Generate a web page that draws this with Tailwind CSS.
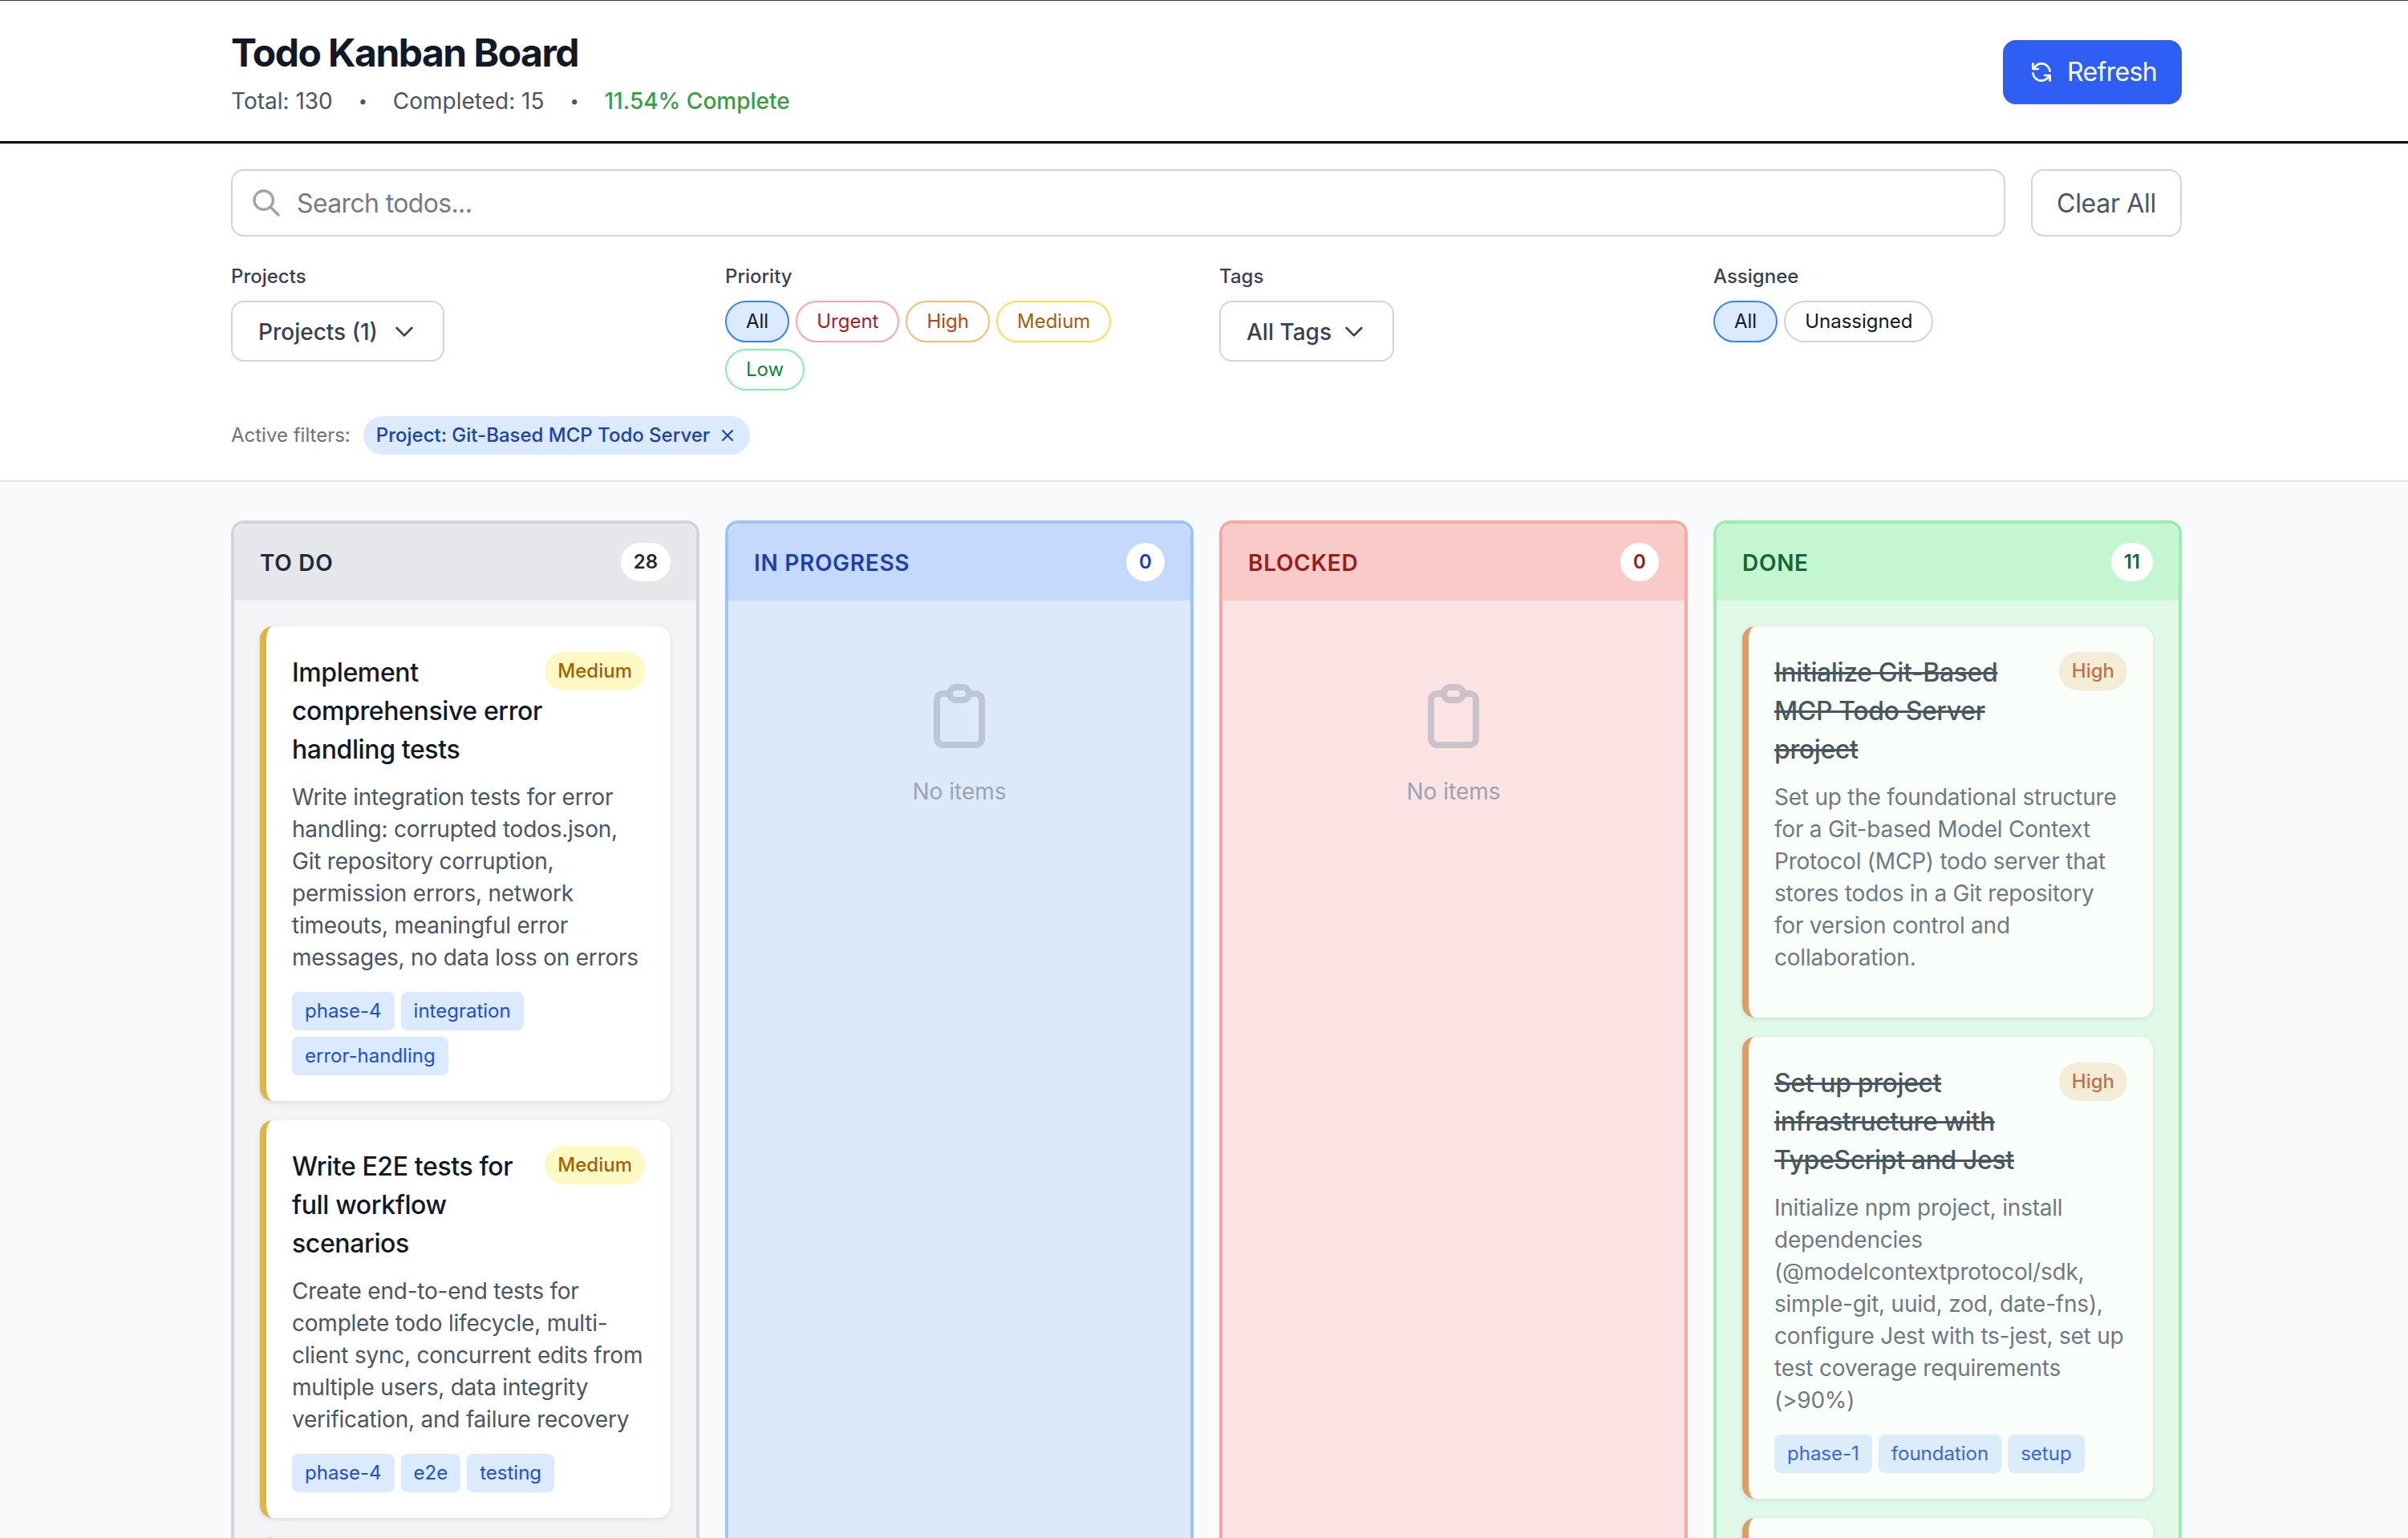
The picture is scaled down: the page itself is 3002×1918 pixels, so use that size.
<!DOCTYPE html>
<html lang="en">
  <head>
    <meta charset="UTF-8" />
    <title>Todo Kanban Board</title>
    <script src="https://cdn.jsdelivr.net/npm/@tailwindcss/browser@4"></script>
  </head>
  <body class="h-[1918px] overflow-hidden bg-[#f9fafb] font-['Inter',sans-serif] text-[#111827]">
    <!-- header -->
    <header class="border-t border-b-[3px] border-t-[#3f3f46] border-b-black bg-white pt-[33px] pb-[30px] pl-[288px]">
      <div class="flex w-[2432px] items-center justify-between">
        <div>
          <h1 class="text-[48px] leading-[64px] font-bold tracking-[-0.032em] text-[#111827]">Todo Kanban Board</h1>
          <div class="mt-2 flex gap-8 text-[28px] leading-[40px] text-[#4b5563]">
            <span>Total: 130</span>
            <span class="flex w-[11px] justify-center text-[20px]">•</span>
            <span>Completed: 15</span>
            <span class="flex w-[11px] justify-center text-[20px]">•</span>
            <span class="font-medium text-[#3a9e3f]">11.54% Complete</span>
          </div>
        </div>
        <button class="flex h-[80px] w-[223px] items-center gap-4 rounded-[16px] bg-[#2f5ef5] px-8 text-[32px] tracking-[-0.02em] text-white">
          <svg class="h-8 w-8 shrink-0" fill="none" viewBox="0 0 24 24" stroke="currentColor" stroke-width="2" stroke-linecap="round" stroke-linejoin="round"><path d="M4 4v5h.582m15.356 2A8.001 8.001 0 004.582 9m0 0H9m11 11v-5h-.581m0 0a8.003 8.003 0 01-15.357-2m15.357 2H15" /></svg>
          Refresh
        </button>
      </div>
    </header>

    <!-- filters -->
    <section class="border-b-2 border-[#e5e7eb] bg-white pt-8 pb-8 pl-[288px]">
      <div class="w-[2432px]">
        <div class="flex gap-8">
          <div class="flex h-[84px] flex-1 items-center gap-[18px] rounded-[16px] border-2 border-[#d1d5db] pl-[22px]">
            <svg class="h-10 w-10 text-[#9ca3af]" fill="none" viewBox="0 0 24 24" stroke="currentColor" stroke-width="2" stroke-linecap="round" stroke-linejoin="round"><path d="M21 21l-6-6m2-5a7 7 0 11-14 0 7 7 0 0114 0z" /></svg>
            <input class="flex-1 bg-transparent pt-[2px] text-[32px] tracking-[-0.02em] outline-none placeholder:text-[#757b86]" placeholder="Search todos..." />
          </div>
          <button class="h-[84px] w-[188px] rounded-[16px] border-2 border-[#d1d5db] bg-white pt-[2px] text-[32px] tracking-[-0.01em] text-[#4b5563]">Clear All</button>
        </div>

        <div class="mt-8 grid grid-cols-4 gap-8">
          <div>
            <div class="mb-3.5 pt-0.5 text-[24px] leading-[32px] font-medium text-[#374151]">Projects</div>
            <button class="flex h-[76px] w-[266px] items-center justify-between rounded-[16px] border-2 border-[#d1d5db] bg-white px-8 text-[28px] font-medium text-[#374151]">
              <span class="pt-[2px]">Projects (1)</span>
              <svg class="h-8 w-8" fill="none" viewBox="0 0 24 24" stroke="currentColor" stroke-width="2" stroke-linecap="round" stroke-linejoin="round"><path d="M19 9l-7 7-7-7" /></svg>
            </button>
          </div>
          <div>
            <div class="mb-3.5 pt-0.5 text-[24px] leading-[32px] font-medium text-[#374151]">Priority</div>
            <div class="flex flex-wrap gap-2 text-[24px] leading-[32px]">
              <span class="rounded-full border-2 border-[#3b82f6] bg-[#dbeafe] px-6 py-2 text-[#111827]">All</span>
              <span class="rounded-full border-2 border-[#fca5a5] bg-white px-6 py-2 text-[#a91d1d]">Urgent</span>
              <span class="rounded-full border-2 border-[#fdba74] bg-white px-6 py-2 text-[#c2410c]">High</span>
              <span class="rounded-full border-2 border-[#fde047] bg-white px-6 py-2 text-[#a16207]">Medium</span>
              <span class="rounded-full border-2 border-[#86efac] bg-white px-6 py-2 text-[#15803d]">Low</span>
            </div>
          </div>
          <div>
            <div class="mb-3.5 pt-0.5 text-[24px] leading-[32px] font-medium text-[#374151]">Tags</div>
            <button class="flex h-[76px] w-[218px] items-center justify-between rounded-[16px] border-2 border-[#d1d5db] bg-white px-8 text-[28px] font-medium text-[#374151]">
              <span class="pt-[2px]">All Tags</span>
              <svg class="h-8 w-8" fill="none" viewBox="0 0 24 24" stroke="currentColor" stroke-width="2" stroke-linecap="round" stroke-linejoin="round"><path d="M19 9l-7 7-7-7" /></svg>
            </button>
          </div>
          <div>
            <div class="mb-3.5 pt-0.5 text-[24px] leading-[32px] font-medium text-[#374151]">Assignee</div>
            <div class="flex flex-wrap gap-2 text-[24px] leading-[32px]">
              <span class="rounded-full border-2 border-[#3b82f6] bg-[#dbeafe] px-6 py-2 text-[#111827]">All</span>
              <span class="rounded-full border-2 border-[#d1d5db] bg-white px-6 py-2 text-[#111827]">Unassigned</span>
            </div>
          </div>
        </div>

        <div class="mt-8 flex items-center gap-4">
          <span class="text-[24px] leading-[32px] text-[#6b7280]">Active filters:</span>
          <span class="flex h-[48px] items-center gap-[14px] rounded-full bg-[#dbeafe] pr-[20px] pl-4 text-[24px] font-medium text-[#1e40af]">
            Project: Git-Based MCP Todo Server
            <svg class="h-4 w-4" fill="none" viewBox="0 0 16 16" stroke="currentColor" stroke-width="2" stroke-linecap="round"><path d="M2 2l12 12M14 2L2 14" /></svg>
          </span>
        </div>
      </div>
    </section>

    <!-- board -->
    <main class="ml-[288px] grid w-[2432px] grid-cols-4 items-stretch gap-8 pt-12">
      <div class="h-[1400px] rounded-[16px] border-4 border-[#d1d5db] bg-[#f3f4f6]">
        <div class="flex h-[96px] items-center justify-between rounded-t-[16px] bg-[#e5e7eb] px-8">
          <h2 class="pt-[2px] text-[28px] font-semibold tracking-[0.025em] text-[#1f2937]">TO DO</h2>
          <span class="flex h-[48px] min-w-[48px] items-center justify-center rounded-full bg-white px-4 text-[24px] font-semibold text-[#1f2937]">28</span>
        </div>
        <div class="flex flex-col gap-6 p-8">
          <article class="rounded-[16px] border-l-8 border-[#e0b53f] bg-white p-8 shadow-[0_2px_6px_rgba(0,0,0,0.1)]">
            <div class="flex items-start gap-[2px]">
              <h3 class="flex-1 pt-[2px] text-[32px] leading-[48px] font-medium tracking-[-0.012em] text-[#111827]">Implement comprehensive error handling tests</h3>
              <span class="rounded-full bg-[#fef9c3] px-4 py-2 text-[24px] leading-[32px] font-medium text-[#a16207]">Medium</span>
            </div>
            <p class="mt-[15px] text-[28px] leading-[40px] tracking-[-0.008em] text-[#4b5563]">Write integration tests for error handling: corrupted todos.json, Git repository corruption, permission errors, network timeouts, meaningful error messages, no data loss on errors</p>
            <div class="mt-[23px] flex flex-wrap gap-2 text-[24px] leading-[32px] text-[#1d4ed8]">
              <span class="rounded-[8px] bg-[#dbeafe] px-4 py-2">phase-4</span>
              <span class="rounded-[8px] bg-[#dbeafe] px-4 py-2">integration</span>
              <span class="rounded-[8px] bg-[#dbeafe] px-4 py-2">error-handling</span>
            </div>
          </article>
          <article class="rounded-[16px] border-l-8 border-[#e0b53f] bg-white p-8 shadow-[0_2px_6px_rgba(0,0,0,0.1)]">
            <div class="flex items-start gap-[2px]">
              <h3 class="flex-1 pt-[2px] text-[32px] leading-[48px] font-medium tracking-[-0.012em] text-[#111827]">Write E2E tests for full workflow scenarios</h3>
              <span class="rounded-full bg-[#fef9c3] px-4 py-2 text-[24px] leading-[32px] font-medium text-[#a16207]">Medium</span>
            </div>
            <p class="mt-[15px] text-[28px] leading-[40px] tracking-[-0.008em] text-[#4b5563]">Create end-to-end tests for complete todo lifecycle, multi-client sync, concurrent edits from multiple users, data integrity verification, and failure recovery</p>
            <div class="mt-[23px] flex flex-wrap gap-2 text-[24px] leading-[32px] text-[#1d4ed8]">
              <span class="rounded-[8px] bg-[#dbeafe] px-4 py-2">phase-4</span>
              <span class="rounded-[8px] bg-[#dbeafe] px-4 py-2">e2e</span>
              <span class="rounded-[8px] bg-[#dbeafe] px-4 py-2">testing</span>
            </div>
          </article>
          <article class="h-[200px] rounded-[16px] border-l-8 border-[#e0b53f] bg-white shadow-[0_2px_6px_rgba(0,0,0,0.1)]"></article>
        </div>
      </div>

      <div class="h-[1400px] rounded-[16px] border-4 border-[#9cc4fb] bg-[#dde9fb]">
        <div class="flex h-[96px] items-center justify-between rounded-t-[16px] bg-[#c4d9fb] px-8">
          <h2 class="pt-[2px] text-[28px] font-semibold tracking-[0.025em] text-[#1e40af]">IN PROGRESS</h2>
          <span class="flex h-[48px] min-w-[48px] items-center justify-center rounded-full bg-white px-4 text-[24px] font-semibold text-[#1e40af]">0</span>
        </div>
        <div class="flex flex-col items-center pt-24">
          <svg class="h-24 w-24 text-[#9ca3af]/50" fill="none" viewBox="0 0 24 24" stroke="currentColor" stroke-width="2" stroke-linecap="round" stroke-linejoin="round"><path d="M9 5H7a2 2 0 00-2 2v12a2 2 0 002 2h10a2 2 0 002-2V7a2 2 0 00-2-2h-2M9 5a2 2 0 002 2h2a2 2 0 002-2M9 5a2 2 0 012-2h2a2 2 0 012 2" /></svg>
          <p class="mt-[26px] text-[28px] leading-[40px] text-[#9ca3af]">No items</p>
        </div>
      </div>

      <div class="h-[1400px] rounded-[16px] border-4 border-[#f5a9a5] bg-[#fbe3e3]">
        <div class="flex h-[96px] items-center justify-between rounded-t-[16px] bg-[#f8cbc9] px-8">
          <h2 class="pt-[2px] text-[28px] font-semibold tracking-[0.025em] text-[#991b1b]">BLOCKED</h2>
          <span class="flex h-[48px] min-w-[48px] items-center justify-center rounded-full bg-white px-4 text-[24px] font-semibold text-[#991b1b]">0</span>
        </div>
        <div class="flex flex-col items-center pt-24">
          <svg class="h-24 w-24 text-[#9ca3af]/50" fill="none" viewBox="0 0 24 24" stroke="currentColor" stroke-width="2" stroke-linecap="round" stroke-linejoin="round"><path d="M9 5H7a2 2 0 00-2 2v12a2 2 0 002 2h10a2 2 0 002-2V7a2 2 0 00-2-2h-2M9 5a2 2 0 002 2h2a2 2 0 002-2M9 5a2 2 0 012-2h2a2 2 0 012 2" /></svg>
          <p class="mt-[26px] text-[28px] leading-[40px] text-[#9ca3af]">No items</p>
        </div>
      </div>

      <div class="h-[1400px] rounded-[16px] border-4 border-[#9ceeb0] bg-[#e1f9e8]">
        <div class="flex h-[96px] items-center justify-between rounded-t-[16px] bg-[#c5f6d2] px-8">
          <h2 class="pt-[2px] text-[28px] font-semibold tracking-[0.025em] text-[#166534]">DONE</h2>
          <span class="flex h-[48px] min-w-[48px] items-center justify-center rounded-full bg-white px-4 text-[24px] font-semibold text-[#166534]">11</span>
        </div>
        <div class="flex flex-col gap-6 p-8">
          <article class="rounded-[16px] border-l-8 border-[#e28c4a] bg-white p-8 opacity-85 shadow-[0_2px_6px_rgba(0,0,0,0.1)]">
            <div class="flex items-start gap-[2px]">
              <h3 class="flex-1 pt-[2px] text-[32px] leading-[48px] font-medium tracking-[-0.012em] text-[#2e3a48] line-through">Initialize Git-Based MCP Todo Server project</h3>
              <span class="rounded-full bg-[#f7ecd6] px-4 py-2 text-[24px] leading-[32px] font-medium text-[#bb5a2c]">High</span>
            </div>
            <p class="mt-[15px] mb-[23px] text-[28px] leading-[40px] tracking-[-0.008em] text-[#5b6470]">Set up the foundational structure for a Git-based Model Context Protocol (MCP) todo server that stores todos in a Git repository for version control and collaboration.</p>
          </article>
          <article class="rounded-[16px] border-l-8 border-[#e28c4a] bg-white p-8 opacity-85 shadow-[0_2px_6px_rgba(0,0,0,0.1)]">
            <div class="flex items-start gap-[2px]">
              <h3 class="flex-1 pt-[2px] text-[32px] leading-[48px] font-medium tracking-[-0.012em] text-[#2e3a48] line-through">Set up project infrastructure with TypeScript and Jest</h3>
              <span class="rounded-full bg-[#f7ecd6] px-4 py-2 text-[24px] leading-[32px] font-medium text-[#bb5a2c]">High</span>
            </div>
            <p class="mt-[15px] text-[28px] leading-[40px] tracking-[-0.008em] text-[#5b6470]">Initialize npm project, install dependencies (@modelcontextprotocol/sdk, simple-git, uuid, zod, date-fns), configure Jest with ts-jest, set up test coverage requirements (&gt;90%)</p>
            <div class="mt-[23px] flex flex-wrap gap-2 text-[24px] leading-[32px] text-[#1d4ed8]">
              <span class="rounded-[8px] bg-[#dbeafe] px-4 py-2">phase-1</span>
              <span class="rounded-[8px] bg-[#dbeafe] px-4 py-2">foundation</span>
              <span class="rounded-[8px] bg-[#dbeafe] px-4 py-2">setup</span>
            </div>
          </article>
          <article class="h-[200px] rounded-[16px] border-l-8 border-[#e28c4a] bg-white opacity-85 shadow-[0_2px_6px_rgba(0,0,0,0.1)]"></article>
        </div>
      </div>
    </main>
  </body>
</html>
